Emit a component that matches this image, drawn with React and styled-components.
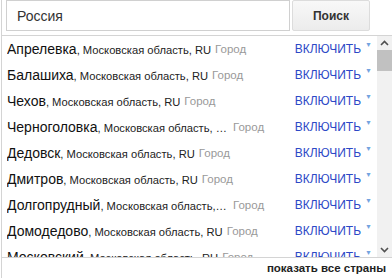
import React from 'react'
import styled, { createGlobalStyle } from 'styled-components'

const GlobalStyle = createGlobalStyle`
  html, body {
    margin: 0;
    padding: 0;
    background: #fff;
  }
  body {
    font-family: "Liberation Sans", Arial, sans-serif;
  }
`

const Widget = styled.div`
  width: 391px;
  height: 278px;
  margin-left: 1px;
  border-left: 1px solid #d4d4d4;
  display: flex;
  flex-direction: column;
  box-sizing: border-box;
`

const SearchBar = styled.form`
  display: flex;
  gap: 2px;
  height: 35px;
  padding-left: 4px;
  box-sizing: border-box;
`

const SearchInput = styled.input`
  width: 284px;
  height: 31px;
  margin: 0;
  box-sizing: border-box;
  border: 1px solid #d0d0d0;
  padding: 0 0 0 10px;
  font-family: inherit;
  font-size: 14px;
  color: #333;
  outline: none;
`

const SearchButton = styled.button`
  width: 78px;
  height: 31px;
  margin: 0;
  border: 1px solid #dcdcdc;
  border-radius: 2px;
  background: linear-gradient(#f8f8f8, #ececec);
  font-family: inherit;
  font-size: 12px;
  font-weight: bold;
  color: #333;
  cursor: pointer;
`

const ListFrame = styled.div`
  display: flex;
  height: 223px;
  box-sizing: border-box;
  border-top: 1px solid #d4d4d4;
  border-bottom: 1px solid #d4d4d4;
`

const List = styled.ul`
  flex: 1;
  list-style: none;
  margin: 0;
  padding: 0;
  overflow: hidden;
`

const Scrollbar = styled.div`
  width: 15px;
  background: #f1f1f1;
  display: flex;
  flex-direction: column;
  align-items: center;
`

const ScrollArrow = styled.div`
  height: 14px;
  display: flex;
  align-items: center;
  justify-content: center;
  margin-top: ${p => (p.down ? 'auto' : '0')};
`

const Thumb = styled.div`
  width: 100%;
  height: 21px;
  background: #c1c1c1;
`

const Row = styled.li`
  display: flex;
  align-items: center;
  height: 26px;
  padding: 0 5px;
  white-space: nowrap;
`

const Place = styled.span`
  max-width: 222px;
  overflow: hidden;
  text-overflow: ellipsis;
  font-size: 11.2px;
  color: #222;
`

const City = styled.span`
  font-size: 14px;
  color: #111;
`

const Kind = styled.span`
  margin-left: 4px;
  font-size: 11.5px;
  color: #999;
`

const Action = styled.a`
  margin-left: auto;
  display: flex;
  align-items: flex-start;
  gap: 4px;
  font-size: 12px;
  color: #2c48c6;
  text-transform: uppercase;
  cursor: pointer;
`

const Caret = styled.span`
  font-size: 7px;
  color: #74a3df;
  margin-top: -1px;
`

const Footer = styled.div`
  flex: 1;
  display: flex;
  align-items: center;
  justify-content: flex-end;
  padding-right: 6px;
  font-size: 11.5px;
  font-weight: bold;
  color: #222;
`

const Chevron = ({ down }) => (
  <svg width="9" height="6" viewBox="0 0 9 6">
    <path
      d={down ? 'M1 1l3.5 3.5L8 1' : 'M1 5l3.5-3.5L8 5'}
      fill="none"
      stroke="#505050"
      strokeWidth="1.6"
    />
  </svg>
)

const cities = [
  'Апрелевка',
  'Балашиха',
  'Чехов',
  'Черноголовка',
  'Дедовск',
  'Дмитров',
  'Долгопрудный',
  'Домодедово',
  'Московский',
]

export default function App() {
  return (
    <>
      <GlobalStyle />
      <Widget>
        <SearchBar onSubmit={e => e.preventDefault()}>
          <SearchInput defaultValue="Россия" />
          <SearchButton>Поиск</SearchButton>
        </SearchBar>
        <ListFrame>
          <List>
            {cities.map(name => (
              <Row key={name}>
                <Place>
                  <City>{name}</City>, Московская область, RU
                </Place>
                <Kind>Город</Kind>
                <Action>
                  включить<Caret>▼</Caret>
                </Action>
              </Row>
            ))}
          </List>
          <Scrollbar>
            <ScrollArrow>
              <Chevron />
            </ScrollArrow>
            <Thumb />
            <ScrollArrow down>
              <Chevron down />
            </ScrollArrow>
          </Scrollbar>
        </ListFrame>
        <Footer>показать все страны</Footer>
      </Widget>
    </>
  )
}
